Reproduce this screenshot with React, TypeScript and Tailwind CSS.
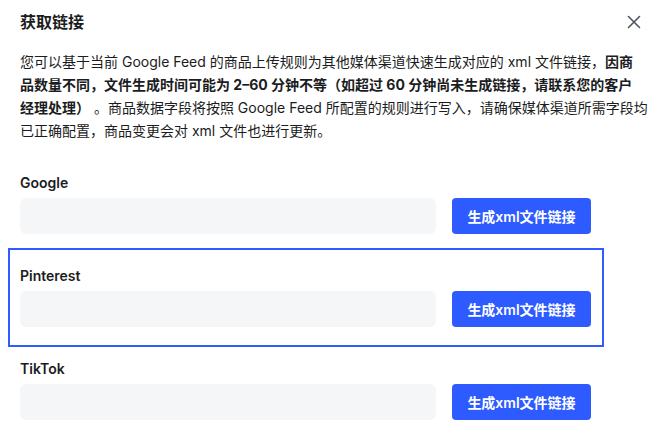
import React from "react";

const font = {
  fontFamily: '"Inter", "Noto Sans CJK SC", sans-serif',
};

function Row({ label }: { label: string }) {
  return (
    <div className="flex flex-col">
      <div className="h-[20px] text-[14px] leading-[20px] font-semibold text-[#1a1c21]">{label}</div>
      <div className="mt-[5px] flex w-[571px] items-center gap-[16px]">
        <div className="h-[36px] flex-1 rounded-[6px] bg-[#f5f6f8]" />
        <button className="flex h-[36px] w-[139px] items-center justify-center rounded-[4px] bg-[#2d5bff] text-[14px] font-semibold text-white">
          生成xml文件链接
        </button>
      </div>
    </div>
  );
}

export default function App() {
  return (
    <div className="h-[445px] w-[670px] bg-white overflow-hidden" style={font}>
      <div className="flex flex-col pl-[20px] pt-[10px]">
        <div className="flex h-[24px] items-center justify-between pr-[29px]">
          <div className="text-[16px] leading-[24px] font-bold text-[#1a1c21]">获取链接</div>
          <svg width="14" height="14" viewBox="0 0 14 14" fill="none" stroke="#4e5461" strokeWidth="1.6" strokeLinecap="round">
            <path d="M1.5 1.5 L12.5 12.5 M12.5 1.5 L1.5 12.5" />
          </svg>
        </div>
        <p className="mt-[16px] whitespace-nowrap text-[14px] leading-[23px] text-[#1a1c21]">
          您可以基于当前 Google Feed 的商品上传规则为其他媒体渠道快速生成对应的 xml 文件链接，<b className="font-bold">因商</b>
          <br />
          <b className="font-bold">品数量不同，文件生成时间可能为 2–60 分钟不等（如超过 60 分钟尚未生成链接，请联系您的客户</b>
          <br />
          <b className="font-bold">经理处理）</b> 。商品数据字段将按照 Google Feed 所配置的规则进行写入，请确保媒体渠道所需字段均
          <br />
          已正确配置，商品变更会对 xml 文件也进行更新。
        </p>
        <div className="mt-[31px]">
          <Row label="Google" />
        </div>
        <div className="-ml-[12px] mt-[14px] w-[596px] border-[2px] border-[#2f5bff] pb-[18px] pl-[10px] pr-[11px] pt-[16px]">
          <Row label="Pinterest" />
        </div>
        <div className="mt-[12px]">
          <Row label="TikTok" />
        </div>
      </div>
    </div>
  );
}
